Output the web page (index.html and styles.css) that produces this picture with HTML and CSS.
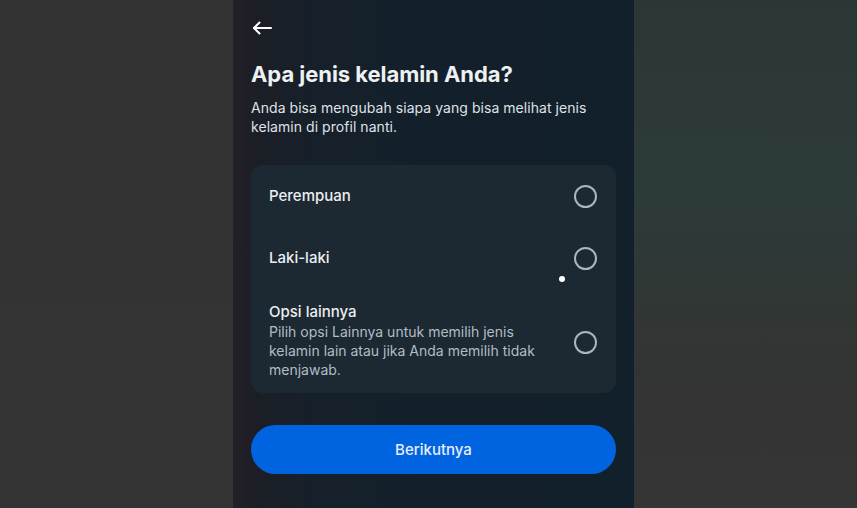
FILE: index.html
```html
<!DOCTYPE html>
<html lang="id">
<head>
<meta charset="utf-8">
<title>Apa jenis kelamin Anda?</title>
<link rel="stylesheet" href="styles.css">
</head>
<body>
<div class="stage">
  <div class="side side-left"></div>
  <main class="phone">
    <button class="back" aria-label="Kembali">
      <svg width="20" height="14" viewBox="0 0 20 14" fill="none" stroke="#ffffff" stroke-width="2" stroke-linecap="round" stroke-linejoin="round">
        <path d="M19 7H2"/>
        <path d="M7.5 1.5L2 7l5.5 5.5"/>
      </svg>
    </button>
    <h1 class="title">Apa jenis kelamin Anda?</h1>
    <p class="subtitle">Anda bisa mengubah siapa yang bisa melihat jenis kelamin di profil nanti.</p>
    <div class="card">
      <div class="option option-short">
        <div class="option-text"><div class="option-label">Perempuan</div></div>
        <span class="radio"></span>
      </div>
      <div class="option option-short">
        <div class="option-text"><div class="option-label">Laki-laki</div></div>
        <span class="radio"></span>
      </div>
      <div class="option option-long">
        <div class="option-text">
          <div class="option-label">Opsi lainnya</div>
          <div class="option-desc">Pilih opsi Lainnya untuk memilih jenis kelamin lain atau jika Anda memilih tidak menjawab.</div>
        </div>
        <span class="radio radio-low"></span>
      </div>
    </div>
    <button class="next">Berikutnya</button>
    <span class="touch-dot"></span>
  </main>
  <div class="side side-right"></div>
</div>
</body>
</html>
```

FILE: styles.css
```css
* { box-sizing: border-box; }

html, body {
  margin: 0;
  padding: 0;
  width: 857px;
  height: 508px;
  overflow: hidden;
  background: #333333;
  font-family: "Inter", "Roboto", "Liberation Sans", sans-serif;
}

.stage {
  display: flex;
  width: 857px;
  height: 508px;
}

.side-left {
  width: 233px;
  background: linear-gradient(180deg, #323232 0%, #343434 100%);
}

.side-right {
  flex: 1;
  background: linear-gradient(180deg, #2b3735 0%, #2d3b39 40%, #313634 62%, #343434 80%, #353535 100%);
}

.phone {
  position: relative;
  width: 401px;
  padding: 0 18px;
  display: flex;
  flex-direction: column;
  align-items: stretch;
  background: linear-gradient(90deg, #241f28 0%, #1c1e26 6%, #16202a 20%, #13202b 45%, #12202c 100%);
  color: #e6e8eb;
}

.back {
  align-self: flex-start;
  margin: 21px 0 0 1px;
  padding: 0;
  border: 0;
  background: none;
  height: 14px;
  display: flex;
}

.title {
  margin: 25px 0 0;
  font-size: 22px;
  line-height: 28px;
  font-weight: 700;
  color: #eef0f2;
  letter-spacing: -0.05px;
}

.subtitle {
  margin: 10px 0 0;
  font-size: 14px;
  line-height: 19px;
  font-weight: 400;
  color: #dfe2e6;
  letter-spacing: 0.05px;
  padding-right: 20px;
}

.card {
  margin-top: 29px;
  background: #1c2933;
  border-radius: 12px;
  display: flex;
  flex-direction: column;
}

.option {
  display: flex;
  align-items: center;
  padding: 0 19px 0 18px;
}

.option-short { height: 62px; }

.option-long { padding-top: 13px; padding-bottom: 14px; }

.option-text {
  flex: 1;
  padding-right: 20px;
}

.option-label {
  font-size: 15px;
  line-height: 20px;
  font-weight: 500;
  color: #eceef0;
}

.option-desc {
  font-size: 14px;
  line-height: 19px;
  color: #b3bcc4;
}

.radio {
  width: 23px;
  height: 23px;
  border-radius: 50%;
  border: 2px solid #aeb5bb;
  flex: none;
}

.radio-low { margin-top: 3px; }

.next {
  margin-top: 32px;
  height: 49px;
  border: 0;
  border-radius: 25px;
  background: #0064e0;
  color: #e8eefa;
  font-family: inherit;
  font-size: 15px;
  font-weight: 500;
}

.touch-dot {
  position: absolute;
  left: 326px;
  top: 276px;
  width: 6px;
  height: 6px;
  border-radius: 50%;
  background: #ffffff;
}
```
